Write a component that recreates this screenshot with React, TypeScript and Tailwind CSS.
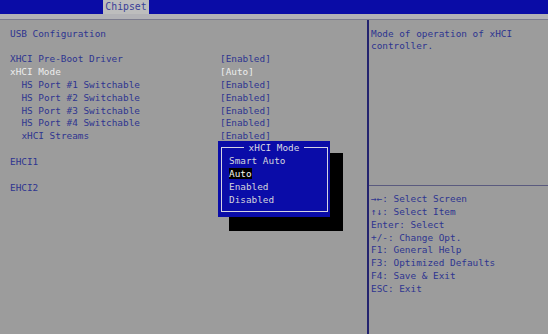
const rows = [
  { label: "XHCI Pre-Boot Driver", value: "[Enabled]", indent: false },
  { label: "xHCI Mode", value: "[Auto]", indent: false, active: true },
  { label: "HS Port #1 Switchable", value: "[Enabled]", indent: true },
  { label: "HS Port #2 Switchable", value: "[Enabled]", indent: true },
  { label: "HS Port #3 Switchable", value: "[Enabled]", indent: true },
  { label: "HS Port #4 Switchable", value: "[Enabled]", indent: true },
  { label: "xHCI Streams", value: "[Enabled]", indent: true },
];

const keys = [
  "\u2192\u2190: Select Screen",
  "\u2191\u2193: Select Item",
  "Enter: Select",
  "+/-: Change Opt.",
  "F1: General Help",
  "F3: Optimized Defaults",
  "F4: Save & Exit",
  "ESC: Exit",
];

const options = ["Smart Auto", "Auto", "Enabled", "Disabled"];

export default function App() {
  return (
    <div
      className="relative w-[548px] h-[334px] overflow-hidden bg-[#9c9c9c] text-[#2e3590] text-[9.4px] leading-[12.85px] flex flex-col"
      style={{ fontFamily: '"DejaVu Sans Mono", "Liberation Mono", monospace' }}
    >
      {/* top bar */}
      <div className="h-[14px] bg-[#0a0ca6] flex shrink-0">
        <div className="ml-[103px] w-[46px] h-[14px] pt-[1px] bg-[#bdbdbd] text-[#3a3f98] text-[9.8px] flex items-center justify-center">
          Chipset
        </div>
      </div>
      <div className="h-[5px] bg-[#b2b2b6] shrink-0" />
      <div className="h-px bg-[#7c7c8e] shrink-0" />

      <div className="flex flex-1">
        {/* left */}
        <div className="w-[367px] pt-[7.5px] pl-[10px]">
          <div>USB Configuration</div>
          <div className="h-[12.85px]" />
          {rows.map((r) => (
            <div key={r.label} className="flex">
              <div className={`w-[210px] ${r.indent ? "pl-[11.4px]" : ""} ${r.active ? "text-[#ececec]" : ""}`}>
                {r.label}
              </div>
              <div className={r.active ? "text-[#ececec]" : ""}>{r.value}</div>
            </div>
          ))}
          <div className="h-[12.85px]" />
          <div>EHCI1</div>
          <div className="h-[12.85px]" />
          <div>EHCI2</div>
        </div>

        {/* right */}
        <div className="flex-1 border-l-2 border-[#23236e] flex flex-col">
          <div className="h-[166px] pt-[7.5px] pl-[2px] border-b border-[#5a5a7e]">
            <div>Mode of operation of xHCI</div>
            <div>controller.</div>
          </div>
          <div className="pt-[7px] pl-[2px]">
            {keys.map((k) => (
              <div key={k}>{k}</div>
            ))}
          </div>
        </div>
      </div>

      {/* popup */}
      <div className="absolute left-[229px] top-[153px] w-[114px] h-[78px] bg-black" />
      <div className="absolute left-[218px] top-[141px] w-[112px] h-[76px] bg-[#0a0ca8]">
        <div className="absolute left-[3px] right-[2px] top-[6px] bottom-[5px] border border-[#d4d4e4]" />
        <div className="absolute left-0 right-0 top-[0.5px] flex justify-center">
          <span className="bg-[#0a0ca8] px-[5px] text-[#d8d8e4]">xHCI Mode</span>
        </div>
        <div className="absolute left-[11px] top-[14px] text-[#d4d4dc]">
          {options.map((o) => (
            <div key={o}>
              <span className={o === "Auto" ? "bg-black text-[#f4f4f0]" : ""}>{o}</span>
            </div>
          ))}
        </div>
      </div>
    </div>
  );
}
